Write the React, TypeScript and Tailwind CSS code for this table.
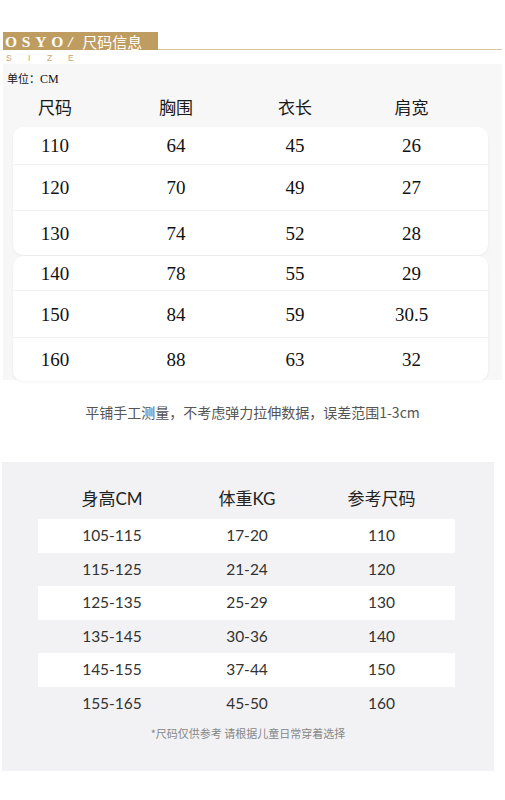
import React from "react";

const serif = { fontFamily: '"Liberation Serif", "Noto Sans CJK SC", serif' } as React.CSSProperties;

const card1 = [
  { h: "h-[38px]", v: ["110", "64", "45", "26"] },
  { h: "h-[46px]", v: ["120", "70", "49", "27"] },
  { h: "h-[44px]", v: ["130", "74", "52", "28"] },
];
const card2 = [
  { h: "h-[35px]", v: ["140", "78", "55", "29"] },
  { h: "h-[47px]", v: ["150", "84", "59", "30.5"] },
  { h: "h-[43px]", v: ["160", "88", "63", "32"] },
];

const ref = [
  ["105-115", "17-20", "110"],
  ["115-125", "21-24", "120"],
  ["125-135", "25-29", "130"],
  ["135-145", "30-36", "140"],
  ["145-155", "37-44", "150"],
  ["155-165", "45-50", "160"],
];

function Card({ rows }: { rows: typeof card1 }) {
  return (
    <div className="ml-[10px] w-[475px] rounded-[10px] bg-white shadow-[0_1px_3px_rgba(0,0,0,0.06)]">
      {rows.map((r, i) => (
        <div
          key={i}
          className={`grid grid-cols-[84px_158px_80px_153px] items-center ${r.h} ${i < rows.length - 1 ? "border-b border-[#f1f1f1]" : ""}`}
        >
          {r.v.map((c, j) => (
            <div key={j} className="text-center text-[19px] leading-none text-[#111]" style={serif}>
              {c}
            </div>
          ))}
        </div>
      ))}
    </div>
  );
}

export default function App() {
  return (
    <div className="w-[505px] bg-white pt-[32px] pb-[29px]" style={{ fontFamily: '"Noto Sans CJK SC", sans-serif' }}>
      {/* title bar */}
      <div className="flex items-end">
        <div className="ml-[3px] flex h-[18px] w-[155px] items-center bg-[#bf9c5f] pl-[2px] pt-[1px]">
          <span
            className="text-[15.5px] font-bold leading-none tracking-[4.8px] text-white"
            style={{ fontFamily: '"Liberation Serif", serif' }}
          >
            OSYO<span className="italic">/</span>
          </span>
          <span className="ml-[5px] text-[15px] leading-none text-white">尺码信息</span>
        </div>
        <div className="mr-[3px] h-[1px] flex-1 bg-[#dcc6a3]" />
      </div>
      <div
        className="ml-[6px] mt-[3px] flex h-[10px] items-center text-[8.5px] leading-none text-[#c8a46a]"
        style={{ fontFamily: '"Liberation Sans", sans-serif' }}
      >
        <span className="w-[21px]">S</span>
        <span className="w-[20px] pl-[1px]">I</span>
        <span className="w-[21px]">Z</span>
        <span>E</span>
      </div>

      {/* panel 1 */}
      <div className="mx-[3px] mt-[1px] h-[316px] bg-[#f7f7f7] pt-[8px]">
        <div className="pl-[4px] text-[11px] leading-[14px] text-[#111]" style={serif}>
          单位：<span className="text-[12px]">CM</span>
        </div>
        <div className="mt-[8px] ml-[10px] grid h-[24px] w-[475px] grid-cols-[84px_158px_80px_153px] items-center">
          {["尺码", "胸围", "衣长", "肩宽"].map((h, i) => (
            <div key={i} className="text-center text-[17px] leading-none text-[#1a1a1a]">
              {h}
            </div>
          ))}
        </div>
        <div className="mt-[9px]">
          <Card rows={card1} />
        </div>
        <div className="mt-[1px]">
          <Card rows={card2} />
        </div>
      </div>

      {/* note */}
      <div className="mt-[23px] text-center text-[14px] leading-[18px] text-[#555]">
        平铺手工测量，不考虑弹力拉伸数据，误差范围1-3cm
      </div>

      {/* panel 2 */}
      <div className="ml-[2px] mt-[41px] h-[309px] w-[492px] bg-[#f2f2f4] pt-[24px]">
        <div
          className="ml-[36px] grid h-[24px] w-[417px] grid-cols-[148px_122px_147px] items-center"
          style={{ fontFamily: '"Lato", "Noto Sans CJK SC", sans-serif' }}
        >
          {["身高CM", "体重KG", "参考尺码"].map((h, i) => (
            <div key={i} className="text-center text-[17px] leading-none text-[#222]">
              {h}
            </div>
          ))}
        </div>
        <div className="ml-[36px] mt-[9px] w-[417px]" style={{ fontFamily: '"Lato", sans-serif' }}>
          {ref.map((r, i) => (
            <div
              key={i}
              className={`grid h-[33.5px] grid-cols-[148px_122px_147px] items-center ${i % 2 === 0 ? "bg-white" : ""}`}
            >
              {r.map((c, j) => (
                <div key={j} className="text-center text-[15.5px] leading-none text-[#333]">
                  {c}
                </div>
              ))}
            </div>
          ))}
        </div>
        <div className="mt-[6px] text-center text-[11px] leading-[14px] text-[#888]">
          *尺码仅供参考 请根据儿童日常穿着选择
        </div>
      </div>
    </div>
  );
}
